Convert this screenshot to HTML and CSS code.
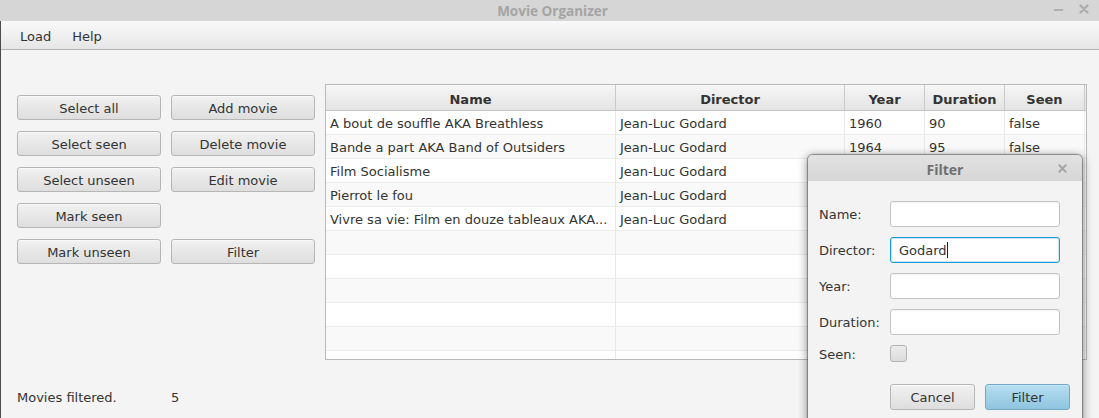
FILE: index.html
```html
<!DOCTYPE html>
<html>
<head>
<meta charset="utf-8">
<title>Movie Organizer</title>
<link rel="stylesheet" href="styles.css">
</head>
<body>
<div class="window">
  <div class="titlebar">
    <span class="title">Movie Organizer</span>
    <div class="wm-controls">
      <span class="wm-min"></span>
      <svg class="wm-close" width="10" height="10" viewBox="0 0 10 10"><path d="M1.5 1.5 L8.5 8.5 M8.5 1.5 L1.5 8.5" stroke="#ababab" stroke-width="2.2" stroke-linecap="round"/></svg>
    </div>
  </div>
  <div class="body">
    <div class="menubar">
      <span class="menu">Load</span>
      <span class="menu">Help</span>
    </div>
    <div class="content">
      <div class="top">
        <div class="buttons">
          <button class="btn">Select all</button>
          <button class="btn">Add movie</button>
          <button class="btn">Select seen</button>
          <button class="btn">Delete movie</button>
          <button class="btn">Select unseen</button>
          <button class="btn">Edit movie</button>
          <button class="btn">Mark seen</button>
          <span></span>
          <button class="btn">Mark unseen</button>
          <button class="btn">Filter</button>
        </div>
        <div class="table">
          <div class="row head">
            <div class="cell">Name</div>
            <div class="cell">Director</div>
            <div class="cell">Year</div>
            <div class="cell">Duration</div>
            <div class="cell">Seen</div>
            <div class="cell filler"></div>
          </div>
          <div class="row"><div class="cell">A bout de souffle AKA Breathless</div><div class="cell">Jean-Luc Godard</div><div class="cell">1960</div><div class="cell">90</div><div class="cell">false</div><div class="cell filler"></div></div>
          <div class="row alt"><div class="cell">Bande a part AKA Band of Outsiders</div><div class="cell">Jean-Luc Godard</div><div class="cell">1964</div><div class="cell">95</div><div class="cell">false</div><div class="cell filler"></div></div>
          <div class="row"><div class="cell">Film Socialisme</div><div class="cell">Jean-Luc Godard</div><div class="cell">2010</div><div class="cell">101</div><div class="cell">false</div><div class="cell filler"></div></div>
          <div class="row alt"><div class="cell">Pierrot le fou</div><div class="cell">Jean-Luc Godard</div><div class="cell">1965</div><div class="cell">110</div><div class="cell">false</div><div class="cell filler"></div></div>
          <div class="row"><div class="cell">Vivre sa vie: Film en douze tableaux AKA...</div><div class="cell">Jean-Luc Godard</div><div class="cell">1962</div><div class="cell">85</div><div class="cell">false</div><div class="cell filler"></div></div>
          <div class="row alt"><div class="cell"></div><div class="cell"></div><div class="cell"></div><div class="cell"></div><div class="cell"></div><div class="cell filler"></div></div>
          <div class="row"><div class="cell"></div><div class="cell"></div><div class="cell"></div><div class="cell"></div><div class="cell"></div><div class="cell filler"></div></div>
          <div class="row alt"><div class="cell"></div><div class="cell"></div><div class="cell"></div><div class="cell"></div><div class="cell"></div><div class="cell filler"></div></div>
          <div class="row"><div class="cell"></div><div class="cell"></div><div class="cell"></div><div class="cell"></div><div class="cell"></div><div class="cell filler"></div></div>
          <div class="row alt"><div class="cell"></div><div class="cell"></div><div class="cell"></div><div class="cell"></div><div class="cell"></div><div class="cell filler"></div></div>
          <div class="row"><div class="cell"></div><div class="cell"></div><div class="cell"></div><div class="cell"></div><div class="cell"></div><div class="cell filler"></div></div>
        </div>
      </div>
      <div class="status">
        <span class="status-label">Movies filtered.</span>
        <span class="status-count">5</span>
      </div>
    </div>
  </div>

  <div class="dialog">
    <div class="dlg-titlebar">
      <span class="dlg-title">Filter</span>
      <svg class="dlg-close" width="9" height="9" viewBox="0 0 9 9"><path d="M1.3 1.3 L7.7 7.7 M7.7 1.3 L1.3 7.7" stroke="#a5a5a5" stroke-width="2" stroke-linecap="round"/></svg>
    </div>
    <div class="dlg-body">
      <div class="form">
        <label class="lbl">Name:</label>
        <div class="input"></div>
        <label class="lbl">Director:</label>
        <div class="input focused"><span class="input-text">Godard</span><span class="caret"></span></div>
        <label class="lbl">Year:</label>
        <div class="input"></div>
        <label class="lbl">Duration:</label>
        <div class="input"></div>
        <label class="lbl seen-lbl">Seen:</label>
        <div class="checkbox"></div>
      </div>
      <div class="dlg-buttons">
        <button class="btn dlg-btn">Cancel</button>
        <button class="btn dlg-btn primary">Filter</button>
      </div>
    </div>
  </div>
</div>
</body>
</html>
```

FILE: styles.css
```css
* { box-sizing: border-box; }
html, body { margin: 0; padding: 0; }
body {
  width: 1099px;
  height: 418px;
  overflow: hidden;
  font-family: "DejaVu Sans", sans-serif;
  font-size: 13px;
  color: #333333;
  background: #f4f4f4;
}
.window {
  position: relative;
  width: 1099px;
  height: 418px;
  display: flex;
  flex-direction: column;
}
.titlebar {
  height: 21px;
  background: #d6d6d6;
  display: flex;
  align-items: center;
  justify-content: center;
  position: relative;
}
.title {
  font-family: "Open Sans", "Noto Sans", sans-serif;
  font-weight: 700;
  font-size: 13.5px;
  color: #a4a4a4;
  padding-left: 6px;
}
.wm-controls {
  position: absolute;
  right: 10px;
  top: 4px;
  display: flex;
  align-items: center;
  gap: 16px;
  height: 10px;
}
.wm-min {
  display: block;
  width: 9px;
  height: 2px;
  background: #b0b0b0;
  margin-top: 1px;
}
.wm-close { display: block; }

.body {
  flex: 1;
  display: flex;
  flex-direction: column;
  border-left: 1px solid #4c4c4c;
}
.menubar {
  height: 29px;
  background: linear-gradient(#f9f9f9, #e6e6e6);
  border-bottom: 1px solid #b2b2b2;
  display: flex;
  align-items: center;
  padding-left: 19px;
  padding-top: 2px;
  gap: 21px;
}
.menu { color: #333; }

.content {
  flex: 1;
  display: flex;
  flex-direction: column;
  padding: 34px 0 0 16px;
}
.top {
  display: flex;
  align-items: flex-start;
  gap: 10px;
}
.buttons {
  margin-top: 11px;
  display: grid;
  grid-template-columns: 144px 144px;
  grid-auto-rows: 25px;
  column-gap: 10px;
  row-gap: 11px;
}
.btn {
  font-family: "DejaVu Sans", sans-serif;
  font-size: 13px;
  color: #333;
  border: 1px solid #b6b6b6;
  border-radius: 3px;
  background: linear-gradient(#f1f1f1, #dedede);
  box-shadow: inset 0 1px 0 #fafafa;
  padding: 2px 0 0 0;
  margin: 0;
  height: 25px;
}

.table {
  width: 762px;
  height: 276px;
  border: 1px solid #b9b9b9;
  background: #ffffff;
  overflow: hidden;
}
.row {
  display: grid;
  grid-template-columns: 290px 229px 80px 80px 80px 1fr;
  height: 24px;
  background: #ffffff;
}
.row.alt { background: #f9f9f9; }
.row .cell {
  border-right: 1px solid #e8e8e8;
  border-bottom: 1px solid #ececec;
  padding: 1px 0 0 4px;
  line-height: 23px;
  white-space: nowrap;
  overflow: hidden;
  color: #333;
}
.row .cell.filler { border-right: none; }
.row.head {
  height: 26px;
  background: linear-gradient(#f6f6f6, #e3e3e3);
}
.row.head .cell {
  border-right: 1px solid #cacaca;
  border-bottom: 1px solid #c5c5c5;
  font-weight: 700;
  text-align: center;
  line-height: 25px;
  padding: 2px 0 0 0;
}
.row.head .cell.filler { border-right: none; }

.status {
  margin-top: 29px;
  display: flex;
  height: 16px;
  align-items: center;
}
.status-label { width: 154px; }

/* dialog */
.dialog {
  position: absolute;
  left: 808px;
  top: 155px;
  width: 274px;
  height: 275px;
  background: #f3f3f3;
  border-radius: 5px 5px 0 0;
  box-shadow: 0 0 1px 1px rgba(70,70,70,0.55), 0 2px 9px 2px rgba(0,0,0,0.35);
  overflow: hidden;
}
.dlg-titlebar {
  height: 26px;
  background: linear-gradient(#e2e2e2, #d6d6d6);
  display: flex;
  align-items: center;
  justify-content: center;
  position: relative;
  padding-top: 2px;
}
.dlg-title {
  font-family: "Open Sans", "Noto Sans", sans-serif;
  font-weight: 700;
  font-size: 14px;
  color: #6f6f6f;
}
.dlg-close {
  position: absolute;
  right: 15px;
  top: 9px;
}
.dlg-body {
  padding: 20px 12px 0 11px;
}
.form {
  display: grid;
  grid-template-columns: 71px 170px;
  grid-template-rows: 26px 26px 26px 26px 17px;
  row-gap: 10px;
  align-items: center;
}
.lbl { color: #333; }
.seen-lbl { padding-top: 2px; }
.input {
  height: 26px;
  background: #ffffff;
  border: 1px solid #c3c3c3;
  border-radius: 3px;
  box-shadow: inset 0 1px 1px rgba(0,0,0,0.05);
  display: flex;
  align-items: center;
  padding-left: 8px;
}
.input.focused {
  border: 1px solid #1a9ad8;
  box-shadow: inset 0 0 0 1px #c9e6f5;
}
.input-text { color: #333; }
.caret {
  display: block;
  width: 1px;
  height: 16px;
  background: #222;
  margin-left: 0;
}
.checkbox {
  width: 17px;
  height: 17px;
  border: 1px solid #b4b4b4;
  border-radius: 3px;
  background: linear-gradient(#ebebeb, #dcdcdc);
}
.dlg-buttons {
  display: flex;
  gap: 10px;
  margin-top: 22px;
  padding-left: 71px;
}
.dlg-btn {
  width: 85px;
  height: 26px;
  padding-top: 0;
}
.dlg-btn.primary {
  background: linear-gradient(#b6def1, #8fc5df);
  border-color: #74a8c6;
  box-shadow: inset 0 1px 0 #c8e7f5;
}
```
